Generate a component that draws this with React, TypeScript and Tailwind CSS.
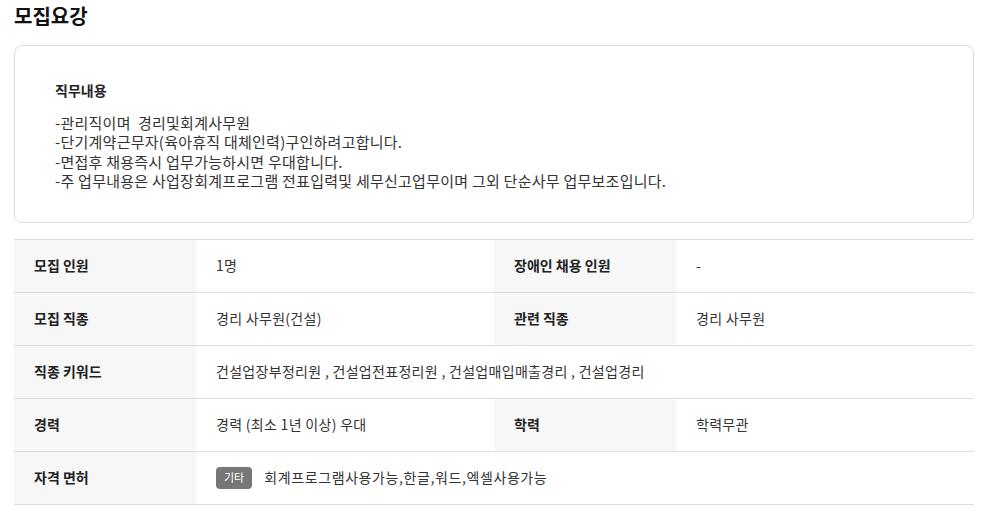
import React from 'react'

const font = { fontFamily: '"Noto Sans CJK KR", "Noto Sans", sans-serif' }

function Label({ children }: { children: React.ReactNode }) {
  return (
    <div className="flex w-[182px] shrink-0 items-center bg-[#f7f7f7] pl-5 text-[14px] font-bold text-[#222]">
      {children}
    </div>
  )
}

function Value({ children }: { children: React.ReactNode }) {
  return (
    <div className="flex flex-1 items-center pl-5 text-[14px] tracking-[0.3px] text-[#333]">
      {children}
    </div>
  )
}

export default function App() {
  return (
    <main className="min-h-screen bg-white px-[14px] text-[#222]" style={font}>
      <h2 className="pt-[2px] text-[20px] font-bold leading-[28px] text-[#111]">모집요강</h2>

      <section className="mt-[15px] w-[960px] rounded-lg border border-[#dddddd] px-10 pt-[34px] pb-[31px]">
        <h3 className="text-[14px] font-bold leading-5 text-[#222]">직무내용</h3>
        <div className="mt-[13px] text-[15px] leading-[19.4px] tracking-[0.25px] text-[#333]">
          <p>-관리직이며 &nbsp;경리및회계사무원</p>
          <p>-단기계약근무자(육아휴직 대체인력)구인하려고합니다.</p>
          <p>-면접후 채용즉시 업무가능하시면 우대합니다.</p>
          <p>-주 업무내용은 사업장회계프로그램 전표입력및 세무신고업무이며 그외 단순사무 업무보조입니다.</p>
        </div>
      </section>

      <div className="mt-4 w-[960px] border-t border-[#dddddd]">
        <div className="flex h-[53px] border-b border-[#dddddd]">
          <Label>모집 인원</Label>
          <Value>1명</Value>
          <Label>장애인 채용 인원</Label>
          <Value>-</Value>
        </div>
        <div className="flex h-[53px] border-b border-[#dddddd]">
          <Label>모집 직종</Label>
          <Value>경리 사무원(건설)</Value>
          <Label>관련 직종</Label>
          <Value>경리 사무원</Value>
        </div>
        <div className="flex h-[53px] border-b border-[#dddddd]">
          <Label>직종 키워드</Label>
          <Value>건설업장부정리원 , 건설업전표정리원 , 건설업매입매출경리 , 건설업경리</Value>
        </div>
        <div className="flex h-[53px] border-b border-[#dddddd]">
          <Label>경력</Label>
          <Value>경력 (최소 1년 이상) 우대</Value>
          <Label>학력</Label>
          <Value>학력무관</Value>
        </div>
        <div className="flex h-[53px] border-b border-[#dddddd]">
          <Label>자격 면허</Label>
          <Value>
            <span className="mr-3 inline-flex h-[22px] items-center rounded bg-[#777777] px-2 text-[11px] tracking-normal text-white">
              기타
            </span>
            <span className="tracking-[0.6px]">회계프로그램사용가능,한글,워드,엑셀사용가능</span>
          </Value>
        </div>
      </div>
    </main>
  )
}
